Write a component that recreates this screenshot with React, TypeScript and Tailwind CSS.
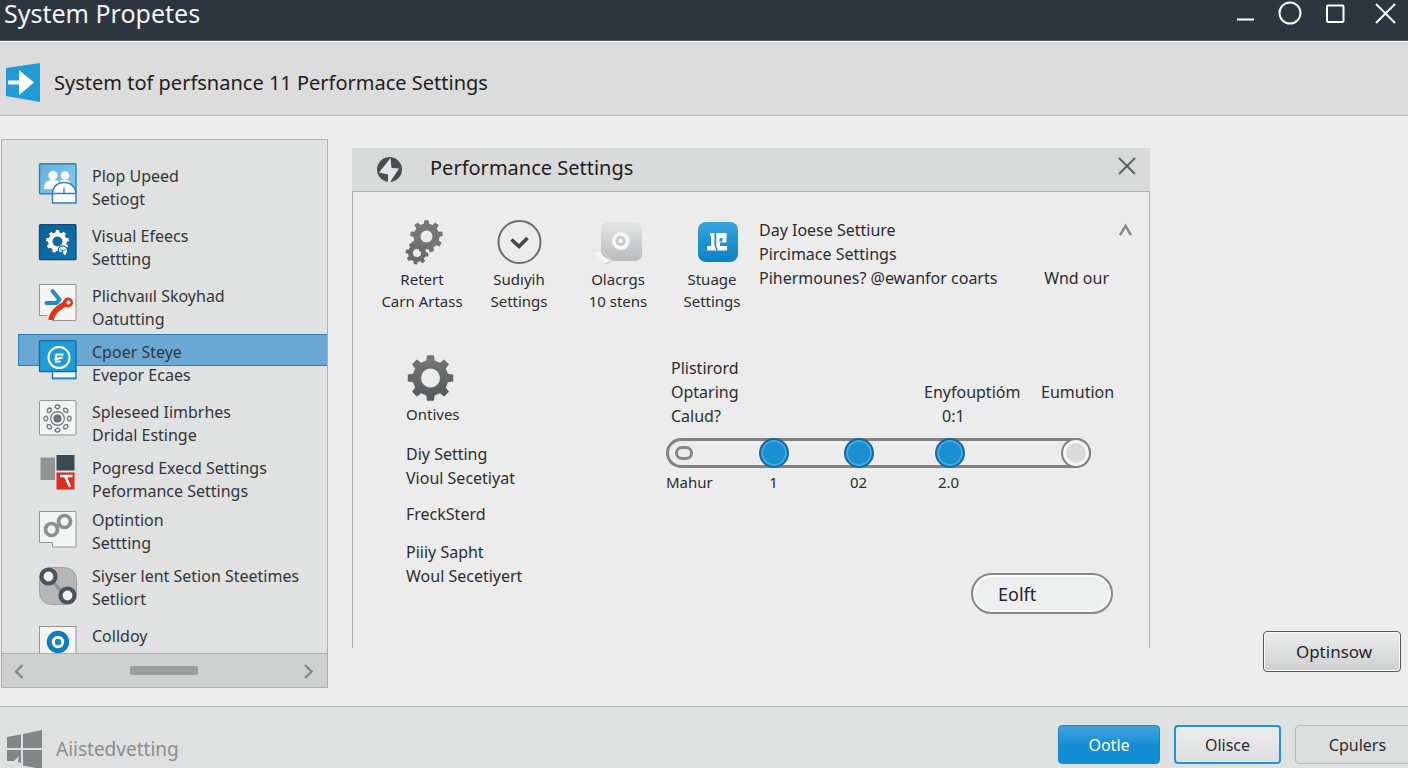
import React, { useState } from "react";

function gearPath(cx: number, cy: number, outer: number, inner: number, hole: number, teeth: number, phase = 0) {
  const step = (Math.PI * 2) / teeth;
  const at = (r: number, a: number) => `${(cx + r * Math.cos(a)).toFixed(2)} ${(cy + r * Math.sin(a)).toFixed(2)}`;
  const points: string[] = [];
  for (let i = 0; i < teeth; i++) {
    const a = i * step + phase - Math.PI / 2;
    points.push(at(inner, a - step * 0.3), at(outer, a - step * 0.19), at(outer, a + step * 0.19), at(inner, a + step * 0.3));
  }
  return (
    `M${points.join("L")}Z` +
    `M${cx - hole} ${cy}a${hole} ${hole} 0 1 0 ${hole * 2} 0a${hole} ${hole} 0 1 0 ${-hole * 2} 0Z`
  );
}

const icon = "block h-11 w-10 shrink-0";

const UsersIcon = () => (
  <svg viewBox="0 0 40 44" className={icon} aria-hidden="true">
    <defs>
      <linearGradient id="users" x1="0" y1="0" x2="1" y2="1">
        <stop offset="0" stopColor="#5fb0dc" />
        <stop offset="1" stopColor="#8fcdee" />
      </linearGradient>
    </defs>
    <rect x="1.5" y="0.7" width="36.5" height="30" rx="1" fill="url(#users)" stroke="#2d83b8" strokeWidth="1.4" />
    <circle cx="15" cy="12.5" r="4.6" fill="#fff" />
    <circle cx="27" cy="12.5" r="4.3" fill="#fff" />
    <path d="M6 26c0-6 3-9 8.500-9 4 0 6 1 7 3-3 1.500-5 3.500-6 6Z" fill="#fff" />
    <path d="M22 18c1.500-1 7.500-1.500 9.500 0l1 2.500H22Z" fill="#fff" />
    <path d="M14.500 40V31c0-7 4.500-11.500 11.500-11.500S38 24 38 31v9Z" fill="#fff" stroke="#2d83b8" strokeWidth="1.5" />
    <path d="M15 30.500h22.500M26 24.500v6" stroke="#2d83b8" strokeWidth="1.3" fill="none" />
  </svg>
);

const VisualIcon = () => (
  <svg viewBox="0 0 40 44" className={icon} aria-hidden="true">
    <defs>
      <linearGradient id="visual" x1="0" y1="0" x2="1" y2="1">
        <stop offset="0" stopColor="#0b5f97" />
        <stop offset="1" stopColor="#1272ad" />
      </linearGradient>
    </defs>
    <rect x="1.5" y="1.7" width="36.5" height="35" rx="1" fill="url(#visual)" stroke="#0c4b76" strokeWidth="1.3" />
    <path d={gearPath(19.5, 18.5, 11.5, 9.3, 5, 9)} fill="#fff" fillRule="evenodd" />
    <path d="M20.500 25.500c2.500-4.500 9.500-2.500 9 3-.2 2-1.500 2.500-1.500 5l-3-2-.5-2.500-4 .5Z" fill="#fff" stroke="#0f68a2" strokeWidth="1.2" />
    <path d="m22 26.500 3.500 1.500 2-2" fill="none" stroke="#0f68a2" strokeWidth="1" />
  </svg>
);

const ToolsIcon = () => (
  <svg viewBox="0 0 40 44" className={icon} aria-hidden="true">
    <path d="M9 32.500H1.500v-31H38v36H14" fill="#f4f5f5" stroke="#929495" />
    <path d="m14.500 8 7 8.500-3 3.500H8.500" fill="none" stroke="#238bc0" strokeWidth="4" strokeLinecap="round" strokeLinejoin="round" />
    <path d="M13 37c1-7.500 7-13 17-17.500" fill="none" stroke="#e23417" strokeWidth="5.5" />
    <circle cx="30" cy="19.5" r="5" fill="#e23417" />
    <circle cx="30.500" cy="19.500" r="2" fill="#fff" />
  </svg>
);

const PowerIcon = () => (
  <svg viewBox="0 0 40 44" className={icon} aria-hidden="true">
    <path d="M14.500 31H38v8.500H14.500Z" fill="#f5f8fa" stroke="#1c6fa6" strokeWidth="1.3" />
    <path d="M14.500 38.500H38v1.700H14.500Z" fill="#2387c0" />
    <rect x="1.5" y="1.7" width="36.5" height="31" rx="1" fill="#219bd5" stroke="#12699f" strokeWidth="1.3" />
    <circle cx="21" cy="18.5" r="10.5" fill="none" stroke="#fff" strokeWidth="2" />
    <path d="M17.500 15.500h8M16.500 20.500l8-2M17 22.500h5.500M18.500 15.500l-1 4.500" stroke="#fff" strokeWidth="2" fill="none" />
  </svg>
);

const RadialIcon = () => (
  <svg viewBox="0 0 40 44" className={icon} aria-hidden="true">
    <rect x="1.5" y="1.5" width="36.5" height="34.5" rx="1" fill="#f2f3f3" stroke="#929495" />
    <g fill="none" stroke="#6a6d6f" strokeWidth="1.2">
      <circle cx="19.5" cy="19.5" r="6.8" />
      <circle cx="19.500" cy="19.500" r="3" fill="#777" strokeWidth="2" />
      {[0, 45, 90, 135, 180, 225, 270, 315].map((a) => (
        <path key={a} d="M17 8.500c0-3.500 5-3.500 5 0l-2.500 1.500Z" transform={`rotate(${a} 19.5 19.5)`} />
      ))}
    </g>
  </svg>
);

const BlocksIcon = () => (
  <svg viewBox="0 0 40 44" className={icon} aria-hidden="true">
    <rect x="2.500" y="2.500" width="14.500" height="22.500" fill="#929393" />
    <rect x="18.500" y="0" width="18" height="15.500" fill="#3c4a54" />
    <rect x="18.500" y="17.500" width="18" height="17" fill="#e32a1c" />
    <path d="M22 21h12.500M27.500 21.500 32 32" fill="none" stroke="#fff" strokeWidth="2.7" />
  </svg>
);

const LinksIcon = () => (
  <svg viewBox="0 0 40 44" className={icon} aria-hidden="true">
    <path d="M1.500 4.500H38V40H14.500v-4.500h-13Z" fill="#f3f4f4" stroke="#929495" />
    <g fill="#f3f4f4" stroke="#8c8e8f" strokeWidth="3.7">
      <circle cx="26.5" cy="14.5" r="6" />
      <circle cx="13.5" cy="22.5" r="6" />
    </g>
  </svg>
);

const NodesIcon = () => (
  <svg viewBox="0 0 40 44" className={icon} aria-hidden="true">
    <rect x="1.5" y="4.5" width="37" height="37" rx="12" fill="#b5b6b6" stroke="#a1a3a3" />
    <path d="m16 20 8 9" stroke="#8d9091" strokeWidth="3" />
    <g fill="#eff0f0" stroke="#48545c" strokeWidth="4.2">
      <circle cx="10.5" cy="13.5" r="7" />
      <circle cx="29.5" cy="32.5" r="7" />
    </g>
  </svg>
);

const TargetIcon = () => (
  <svg viewBox="0 0 40 44" className={icon} aria-hidden="true">
    <rect x="1.5" y="3.5" width="36.5" height="38" fill="#f3f4f4" stroke="#929495" />
    <circle cx="20" cy="19" r="8.7" fill="#fff" stroke="#0f7db8" strokeWidth="5" />
    <circle cx="20" cy="19" r="3.2" fill="#1589c4" />
  </svg>
);

type Item = { id: string; lines: string[]; Icon: () => React.JSX.Element; row: string };

const items: Item[] = [
  { id: "speed", lines: ["Plop Upeed", "Setiogt"], Icon: UsersIcon, row: "h-15" },
  { id: "visual", lines: ["Visual Efeecs", "Settting"], Icon: VisualIcon, row: "h-15" },
  { id: "tools", lines: ["Plichvaııl Skoyhad", "Oatutting"], Icon: ToolsIcon, row: "h-14" },
  { id: "power", lines: ["Cpoer Steye", "Evepor Ecaes"], Icon: PowerIcon, row: "h-15" },
  { id: "radial", lines: ["Spleseed Iimbrhes", "Dridal Estinge"], Icon: RadialIcon, row: "h-14" },
  { id: "blocks", lines: ["Pogresd Execd Settings", "Peformance Settings"], Icon: BlocksIcon, row: "h-13" },
  { id: "links", lines: ["Optintion", "Settting"], Icon: LinksIcon, row: "h-14" },
  { id: "nodes", lines: ["Siyser lent Setion Steetimes", "Setliort"], Icon: NodesIcon, row: "h-15" },
  { id: "target", lines: ["Colldoy"], Icon: TargetIcon, row: "h-14" },
];

function TitleBar() {
  const button = "flex size-8 items-center justify-center text-white";
  return (
    <header className="flex h-[41px] items-start justify-between border-b border-[#59616a] bg-[#2d353f] pl-1">
      <h1 className="text-[25px] leading-[26px] text-[#f1f2f3]">System Propetes</h1>
      <div className="flex gap-4 pr-1">
        <button type="button" aria-label="Minimize" className={button}>
          <svg viewBox="0 0 32 32" className="size-8" fill="none" stroke="currentColor" strokeWidth="2"><path d="M9 19.500h17" /></svg>
        </button>
        <button type="button" aria-label="Help" className={button}>
          <svg viewBox="0 0 32 32" className="size-8" fill="none" stroke="currentColor" strokeWidth="2"><circle cx="14" cy="13" r="10.5" /></svg>
        </button>
        <button type="button" aria-label="Maximize" className={button}>
          <svg viewBox="0 0 32 32" className="size-8" fill="none" stroke="currentColor" strokeWidth="2"><rect x="3" y="5.5" width="16.5" height="16.5" rx="1" /></svg>
        </button>
        <button type="button" aria-label="Close" className={button}>
          <svg viewBox="0 0 32 32" className="size-8" fill="none" stroke="currentColor" strokeWidth="2"><path d="m4 4 19 19M23 4 4 23" /></svg>
        </button>
      </div>
    </header>
  );
}

function Sidebar() {
  const [selected, setSelected] = useState("power");
  return (
    <nav aria-label="Settings" className="flex w-[327px] shrink-0 flex-col border border-[#adafaf] bg-[#e0e1e1]">
      <ul className="h-0 grow overflow-hidden pt-[23px]">
        {items.map(({ id, lines, Icon, row }) => (
          <li key={id} className={row}>
            <button
              type="button"
              onClick={() => setSelected(id)}
              aria-current={selected === id}
              className="relative isolate flex w-full items-start gap-3.5 pl-9 text-left"
            >
              {selected === id && (
                <span className="absolute -top-[5px] right-0 left-4 -z-10 h-8 border border-r-0 border-[#2d7db4] bg-[#6aa7d3]" />
              )}
              <Icon />
              <span className="pt-0.5 text-base leading-[23px] text-[#333536]">
                {lines.map((line) => (
                  <span key={line} className="block whitespace-nowrap">{line}</span>
                ))}
              </span>
            </button>
          </li>
        ))}
      </ul>
      <div className="flex h-[34px] items-center justify-between border-t border-[#adafaf] bg-[#cfd0d0] pr-2.5 pl-2 text-[#858788]">
        <button type="button" aria-label="Scroll left">
          <svg viewBox="0 0 16 16" className="size-4" fill="none" stroke="currentColor" strokeWidth="2.4"><path d="M12.500 2 6 8.500l6.500 6.500" /></svg>
        </button>
        <span className="h-[9px] w-[68px] rounded-xs bg-[#9c9e9e]" />
        <button type="button" aria-label="Scroll right">
          <svg viewBox="0 0 16 16" className="size-4" fill="none" stroke="currentColor" strokeWidth="2.4"><path d="m4 2 6.500 6.500L4 15" /></svg>
        </button>
      </div>
    </nav>
  );
}

const tileIcon = "block h-12 w-13";

const GearsTile = () => (
  <svg viewBox="0 0 52 48" className={tileIcon} aria-hidden="true">
    <path d={gearPath(30.5, 18.5, 16.5, 13, 6, 9)} fill="#747677" fillRule="evenodd" />
    <path d={gearPath(21, 35, 11.5, 9, 4, 8, 0.15)} fill="#6b6d6e" fillRule="evenodd" />
  </svg>
);

const CheckTile = () => (
  <svg viewBox="0 0 52 48" className={tileIcon} aria-hidden="true">
    <circle cx="26.500" cy="24" r="21" fill="none" stroke="#6a6c6d" strokeWidth="2" />
    <path d="m18.500 21.500 7.500 7 8.500-8.500" fill="none" stroke="#454748" strokeWidth="3.6" />
  </svg>
);

const DiscTile = () => (
  <svg viewBox="0 0 52 48" className={tileIcon} aria-hidden="true">
    <defs>
      <linearGradient id="disc" x1="0" y1="0" x2="0" y2="1">
        <stop offset="0" stopColor="#e5e6e6" />
        <stop offset="1" stopColor="#b8babc" />
      </linearGradient>
    </defs>
    <rect x="9" y="4" width="41" height="39" rx="7" fill="url(#disc)" />
    <path d="M3 36c4-6 6-2 8 2l10 6-8 2-4-5Z" fill="#f7f7f7" />
    <path d="m10 33 10 10-7 3" fill="none" stroke="#d1d2d3" strokeWidth="1.5" />
    <circle cx="29" cy="23" r="9" fill="#f5f5f5" />
    <circle cx="28.5" cy="23" r="3.7" fill="#efefef" stroke="#c4c6c7" strokeWidth="2.5" />
  </svg>
);

const StorageTile = () => (
  <svg viewBox="0 0 52 48" className={tileIcon} aria-hidden="true">
    <defs>
      <linearGradient id="storage" x1="0" y1="0" x2="0" y2="1">
        <stop offset="0" stopColor="#37a4de" />
        <stop offset="1" stopColor="#0c81c2" />
      </linearGradient>
    </defs>
    <rect x="12" y="4" width="40" height="40" rx="8" fill="url(#storage)" />
    <path
      d="M24 15h4.500v12.500H30V15h10.500v9.500H34V28h7v4.500H21V28h4V18h-1Zm9.500 5v3.500h3V20Z"
      fill="#fff"
      fillRule="evenodd"
    />
    <path d="M29.500 15v13l1.500 4.500" fill="none" stroke="#1689c8" strokeWidth="1.4" />
  </svg>
);

const tiles = [
  { lines: ["Retert", "Carn Artass"], Icon: GearsTile },
  { lines: ["Sudıyih", "Settings"], Icon: CheckTile },
  { lines: ["Olacrgs", "10 stens"], Icon: DiscTile },
  { lines: ["Stuage", "Settings"], Icon: StorageTile },
];

const rangeBase =
  "pointer-events-none col-start-1 row-start-1 h-[30px] w-full appearance-none bg-transparent [&::-webkit-slider-thumb]:pointer-events-auto [&::-webkit-slider-thumb]:size-[30px] [&::-webkit-slider-thumb]:appearance-none [&::-webkit-slider-thumb]:rounded-full [&::-webkit-slider-thumb]:border-2";
const blueThumb =
  "[&::-webkit-slider-thumb]:border-[#17679b] [&::-webkit-slider-thumb]:bg-[#178fd0] [&::-webkit-slider-thumb]:shadow-[inset_0_0_0_2px_#43abe0]";
const whiteThumb =
  "[&::-webkit-slider-thumb]:border-[#7e8081] [&::-webkit-slider-thumb]:bg-[#dadada] [&::-webkit-slider-thumb]:shadow-[inset_0_0_0_3px_#f6f6f6]";

function LevelSlider() {
  const [values, setValues] = useState([47, 90, 136, 200]);
  const names = ["Level 1", "Level 02", "Level 2.0", "Maximum"];
  return (
    <div className="w-[425px]">
      <div className="grid items-center rounded-full shadow-[inset_0_0_0_3px_#808283]">
        <span className="col-start-1 row-start-1 ml-[9px] h-3.5 w-[18px] rounded-full border-3 border-[#858788]" />
        {values.map((value, i) => (
          <input
            key={names[i]}
            type="range"
            aria-label={names[i]}
            min={0}
            max={200}
            value={value}
            onChange={(e) => setValues(values.map((v, j) => (j === i ? Number(e.target.value) : v)))}
            className={`${rangeBase} ${i === 3 ? whiteThumb : blueThumb}`}
          />
        ))}
      </div>
      <div className="grid grid-cols-[65px_85px_85px_95px_1fr] pt-[3px] text-center text-[15px] leading-[22px]">
        <span className="text-left">Mahur</span>
        <span>1</span>
        <span>02</span>
        <span>2.0</span>
      </div>
    </div>
  );
}

function PerformancePanel() {
  return (
    <section className="flex min-w-0 flex-1 flex-col self-start" aria-labelledby="panel-title">
      <div className="flex h-11 items-center border-b border-[#adafaf] bg-[#d9dada] pr-3 pl-6">
        <svg viewBox="0 0 26 26" className="size-[26px]" aria-hidden="true">
          <circle cx="13.5" cy="12.5" r="12.5" fill="#4b4e50" />
          <path d="M14.500 1 3 15.500l9 2V26h1.500L23 11.500l-7.500-.5Z" fill="#e4e5e5" />
        </svg>
        <h2 id="panel-title" className="flex-1 pb-1 pl-7 text-xl text-[#1e2021]">Performance Settings</h2>
        <button type="button" aria-label="Close panel" className="pb-2">
          <svg viewBox="0 0 22 22" className="size-[22px]" fill="none" stroke="#606264" strokeWidth="2"><path d="m3 3 16 16M19 3 3 19" /></svg>
        </button>
      </div>
      <div className="border-x border-[#adafaf] pt-[26px] pr-4 pb-[34px] pl-[19px] text-[#2b2d2e]">
        <div className="grid grid-cols-[100px_94px_104px_84px_1fr]">
          {tiles.map(({ lines, Icon }) => (
            <button key={lines[0]} type="button" className="flex flex-col items-center gap-0.5 text-[15px] leading-[22px]">
              <Icon />
              <span>
                {lines.map((line) => (
                  <span key={line} className="block whitespace-nowrap">{line}</span>
                ))}
              </span>
            </button>
          ))}
          <div className="flex justify-between pl-[5px] text-base leading-6">
            <div className="whitespace-nowrap">
              <p>Day Ioese Settiure</p>
              <p>Pircimace Settings</p>
              <p>Pihermounes? @ewanfor coarts</p>
            </div>
            <div className="flex gap-2">
              <span className="pt-12 whitespace-nowrap">Wnd our</span>
              <button type="button" aria-label="Collapse" className="self-start pt-1">
                <svg viewBox="0 0 16 16" className="size-4" fill="none" stroke="#898b8c" strokeWidth="2.5"><path d="m3 13 5.500-9 5.500 9" /></svg>
              </button>
            </div>
          </div>
        </div>

        <div className="flex justify-between pt-[42px] pl-[34px]">
          <div className="text-base leading-6">
            <svg viewBox="0 0 48 48" className="size-12" aria-hidden="true">
              <defs>
                <linearGradient id="gear" x1="0" y1="0" x2="0" y2="1">
                  <stop offset="0" stopColor="#757778" />
                  <stop offset="1" stopColor="#55585a" />
                </linearGradient>
              </defs>
              <path d={gearPath(24.5, 24, 23, 18, 9.5, 8)} fill="url(#gear)" fillRule="evenodd" />
            </svg>
            <h3 className="text-[15px]">Ontives</h3>
            <p className="pt-4">Diy Setting</p>
            <p>Vioul Secetiyat</p>
            <p className="pt-3">FreckSterd</p>
            <p className="pt-3.5">Piiiy Sapht</p>
            <p>Woul Secetiyert</p>
          </div>
          <div className="flex w-[467px] flex-col pt-0.5">
            <div className="grid grid-cols-[232px_98px_1fr] gap-x-5 pb-2.5 pl-[5px] text-base leading-6 whitespace-nowrap">
              <p>Plistirord<br />Optaring<br />Calud?</p>
              <p className="pt-6 pl-px">Enyfouptióm<span className="block pl-[18px]">0:1</span></p>
              <p className="pt-6">Eumution</p>
            </div>
            <LevelSlider />
            <button
              type="button"
              className="mt-20 mr-5 h-[41px] w-[142px] self-end rounded-full border-2 border-[#858788] bg-[#eeefef] pl-[25px] text-left text-lg text-[#242627] shadow-[inset_0_0_0_2px_#fafafa]"
            >
              Eolft
            </button>
          </div>
        </div>
      </div>
    </section>
  );
}

export default function App() {
  return (
    <div className="flex min-h-screen flex-col overflow-hidden bg-[#ebeceb] font-['Noto_Sans','Open_Sans',sans-serif]">
      <TitleBar />
      <div className="flex h-[75px] items-center gap-3 border-t border-b border-t-[#f4f5f5] border-b-[#b4b6b6] bg-[#dbdcdb] pt-2 pl-1">
        <svg viewBox="0 0 38 42" className="h-[42px] w-[38px]" aria-hidden="true">
          <path d="M2 6 36 1v39L2 34Z" fill="#209bd5" />
          <path d="M4 18.500h11V8l15 12.500L15 33V22.500H4Z" fill="#fff" />
        </svg>
        <p className="text-xl text-[#1e2021]">System tof perfsnance 11 Performace Settings</p>
      </div>

      <main className="flex flex-1 gap-6 pt-[23px] pr-[7px] pb-[18px] pl-px">
        <Sidebar />
        <div className="flex flex-1 gap-[113px] pt-[9px]">
          <PerformancePanel />
          <div className="flex w-[138px] items-end pb-4">
            <button
              type="button"
              className="h-[41px] w-full rounded border border-[#55585a] bg-linear-to-b from-[#ebecec] to-[#cfd0d0] pl-1 text-[17px] text-[#242627] shadow-[inset_0_0_0_1px_#f8f8f8]"
            >
              Optinsow
            </button>
          </div>
        </div>
      </main>

      <footer className="flex h-[62px] items-start justify-between overflow-hidden border-t border-[#b4b6b6] bg-[#dfe0e0] pl-1.5">
        <div className="flex items-center gap-3 pt-[22px]">
          <svg viewBox="0 0 38 40" className="h-10 w-[38px]" fill="#838586" aria-hidden="true">
            <path d="M1 8l14-2.500V19H1ZM17 5 36 1v18H17ZM1 21h14v13l-3-1 1-6-5 5H1ZM17 21h19v19l-19-3.500Z" />
          </svg>
          <span className="text-[19px] leading-7 text-[#8b8d8e]">Aiistedvetting</span>
        </div>
        <div className="-mr-3 flex gap-3.5 pt-[18px] text-base text-[#2b2d2e]">
          <button type="button" className="h-[39px] w-[102px] rounded border border-[#1c86c4] bg-linear-to-b from-[#41a5de] to-[#138ed4] to-50% text-white">
            Ootle
          </button>
          <button type="button" className="h-[39px] w-[107px] rounded border-2 border-[#1b93df] bg-linear-to-b from-[#ebecec] to-[#dedfe0]">
            Olisce
          </button>
          <button type="button" className="h-[39px] w-[125px] rounded border border-[#b4b6b6] bg-[#dcdddd]">
            Cpulers
          </button>
        </div>
      </footer>
    </div>
  );
}
